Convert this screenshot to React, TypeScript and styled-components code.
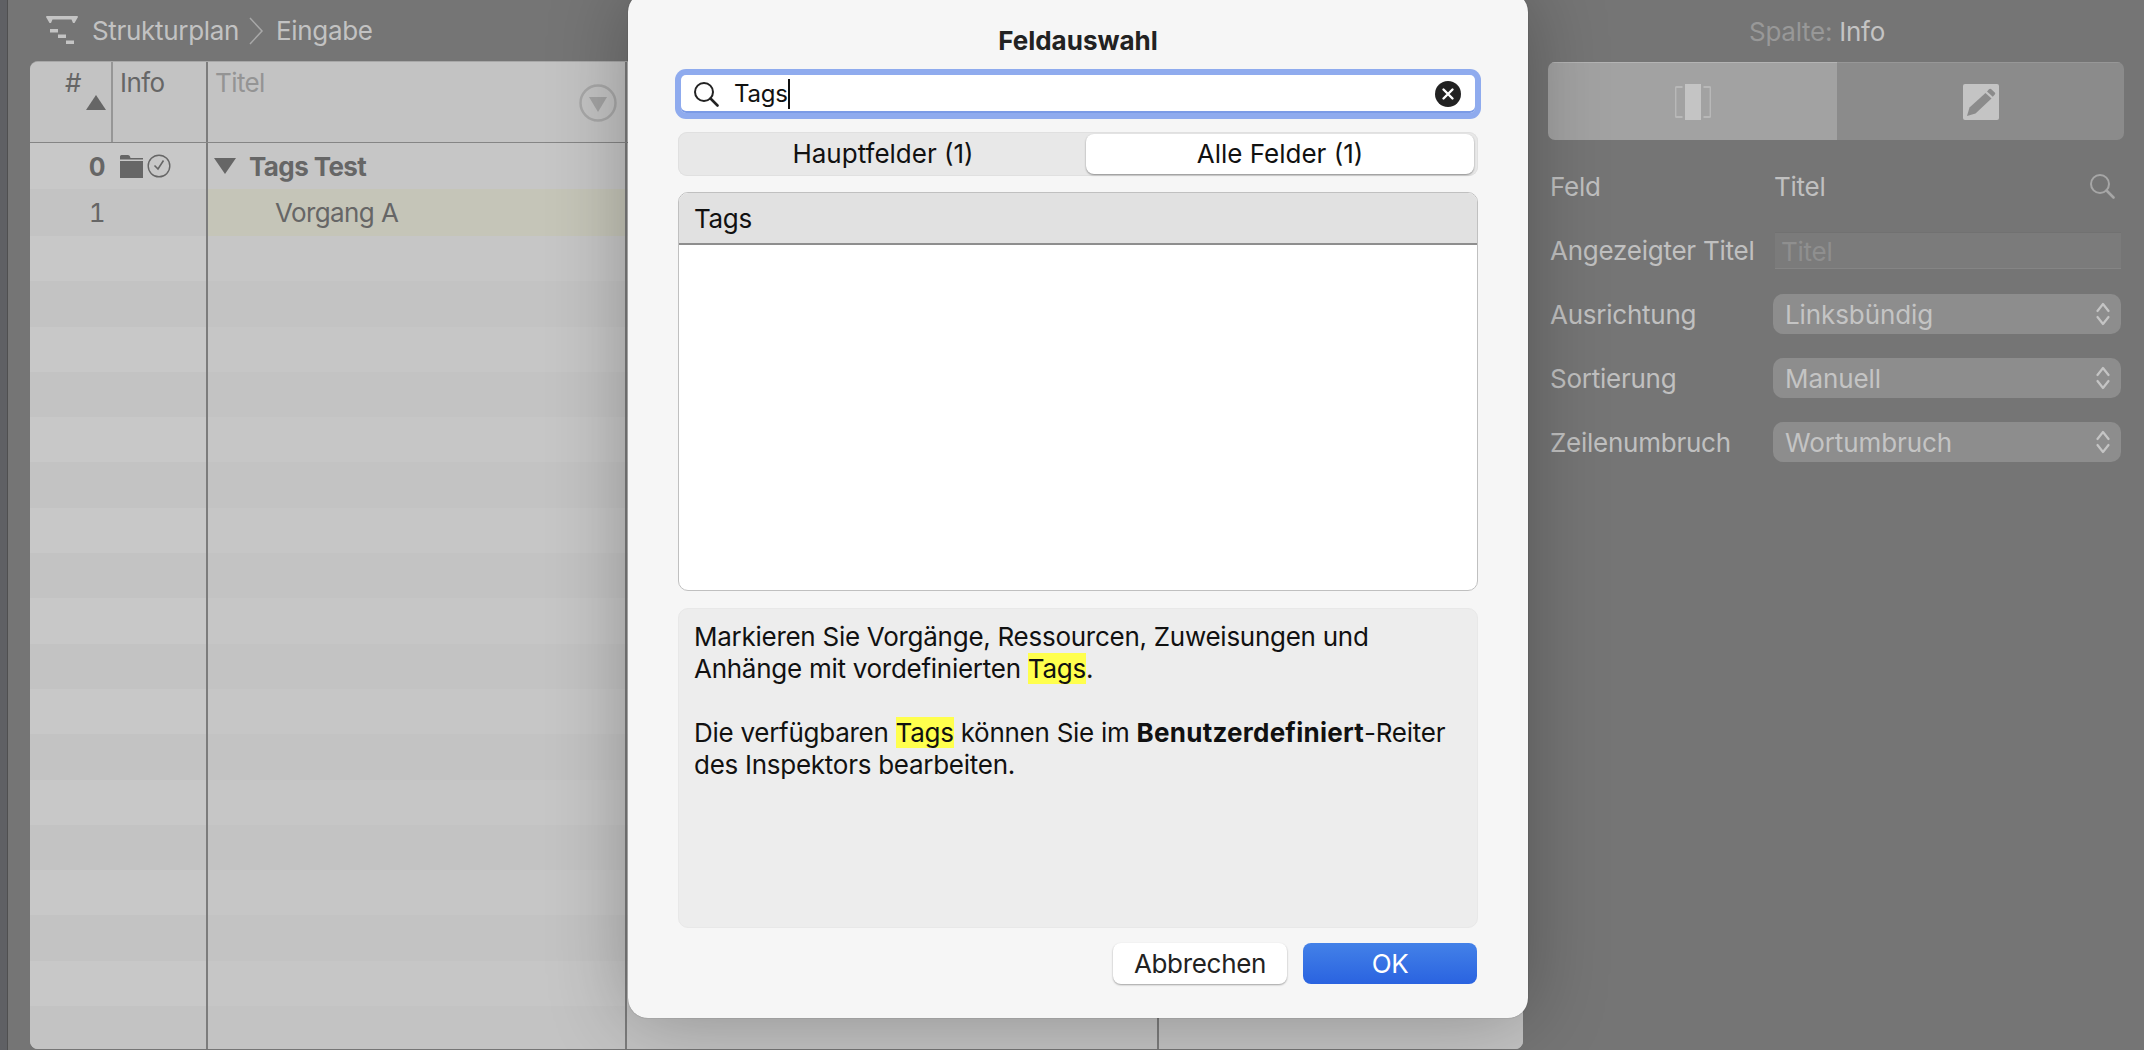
import * as React from 'react';
import styled, { createGlobalStyle } from 'styled-components';

const GlobalStyle = createGlobalStyle`
    html, body {
        margin: 0;
        padding: 0;
        height: 100%;
        overflow: hidden;
        background: #757575;
    }
    * {
        box-sizing: border-box;
    }
`

const Page = styled.div`
    display: flex;
    width: 2144px;
    height: 1050px;
    overflow: hidden;
    position: relative;
    font-family: 'Inter', 'Liberation Sans', sans-serif;
    font-size: 26px;
    letter-spacing: -0.32px;
`

const DockEdge = styled.div`
    width: 8px;
    background: #5f6064;
    border-right: 1px solid #4f4f50;
`

const Main = styled.div`
    width: 1515px;
    display: flex;
    flex-direction: column;
    background: #757575;
`

const Breadcrumb = styled.div`
    height: 61px;
    display: flex;
    align-items: center;
    padding-left: 38px;
    color: #c2c2c2;
`

const CrumbText = styled.span`
    margin-left: 14px;
`

const CrumbChevron = styled.svg`
    width: 16px;
    height: 28px;
    margin-left: 9px;
    margin-right: -2px;
`

const Table = styled.div`
    flex: 1;
    margin: 0 0 1px 22px;
    border-radius: 8px;
    overflow: hidden;
    background: #c4c4c4;
    border-top: 1px solid #a8a8a8;
    color: #666666;
    letter-spacing: -0.6px;
`

const columns = '83px 95px 419px 532px 1fr'

const HeaderRow = styled.div`
    display: grid;
    grid-template-columns: ${columns};
    height: 81px;
    border-bottom: 1px solid #858585;
    background: #c3c3c3;
`

const HeaderCell = styled.div<{ line?: string }>`
    position: relative;
    padding: 5px 0 0 7px;
    line-height: 32px;
    border-right: 2px solid ${({ line }) => line || '#7c7c7c'};
`

const HashLabel = styled.div`
    padding-left: 28px;
`

const SortArrow = styled.div`
    position: absolute;
    left: 56px;
    top: 33px;
    width: 0;
    height: 0;
    border-left: 10px solid transparent;
    border-right: 10px solid transparent;
    border-bottom: 15px solid #666666;
`

const TitleLabel = styled.span`
    color: #949494;
`

const FilterButton = styled.svg`
    position: absolute;
    right: 8px;
    top: 22px;
    width: 38px;
    height: 38px;
`

const Row = styled.div<{ $striped: boolean; $height: number }>`
    display: grid;
    grid-template-columns: ${columns};
    height: ${({ $height }) => $height}px;
    background: ${({ $striped }) => ($striped ? '#c3c3c3' : '#c8c8c8')};
`

const NumberCell = styled.div<{ $bold?: boolean }>`
    display: flex;
    align-items: center;
    justify-content: flex-end;
    padding-right: 8px;
    font-variant-numeric: tabular-nums;
    font-weight: ${({ $bold }) => ($bold ? 700 : 400)};
`

const InfoCell = styled.div`
    display: flex;
    align-items: center;
    gap: 4px;
    padding-left: 7px;
    border-right: 2px solid #7c7c7c;
`

const TitleCell = styled.div<{ $tint?: boolean; $indent?: number; $bold?: boolean }>`
    display: flex;
    align-items: center;
    padding-left: ${({ $indent }) => $indent || 0}px;
    background: ${({ $tint }) => ($tint ? '#c5c5b8' : 'rgba(195, 195, 195, 0.5)')};
    font-weight: ${({ $bold }) => ($bold ? 700 : 400)};
    border-right: 2px solid #7c7c7c;
`

const Disclosure = styled.div`
    width: 0;
    height: 0;
    margin-right: 13px;
    border-left: 11px solid transparent;
    border-right: 11px solid transparent;
    border-top: 16px solid #666666;
`

const PlainCell = styled.div<{ $line?: boolean }>`
    background: rgba(195, 195, 195, 0.5);
    border-right: ${({ $line }) => ($line ? '2px solid #7c7c7c' : 'none')};
`

const Inspector = styled.div`
    flex: 1;
    display: flex;
    flex-direction: column;
    padding: 0 20px 0 27px;
    background: #757575;
    letter-spacing: -0.25px;
`

const InspectorTitle = styled.div`
    height: 62px;
    display: flex;
    align-items: center;
    justify-content: center;
    gap: 7px;
    padding-right: 40px;
    color: #989898;
`

const InspectorTitleValue = styled.span`
    color: #c4c4c4;
`

const ModeSwitch = styled.div`
    display: grid;
    grid-template-columns: 289px 1fr;
    height: 78px;
    margin-left: -2px;
    border-radius: 7px;
    overflow: hidden;
    margin-bottom: 14px;
`

const ModeButton = styled.div<{ $active?: boolean }>`
    display: flex;
    align-items: center;
    justify-content: center;
    background: ${({ $active }) => ($active ? '#a2a2a2' : '#8b8b8b')};
    border-top: 1px solid ${({ $active }) => ($active ? '#b4b4b4' : '#979797')};
`

const FieldRow = styled.div`
    display: grid;
    grid-template-columns: 223px 1fr;
    align-items: center;
    height: 64px;
    color: #c0c0c0;
`

const FieldValue = styled.div`
    display: flex;
    align-items: center;
    justify-content: space-between;
    padding-right: 9px;
    padding-left: 1px;
`

const DisabledInput = styled.div`
    height: 37px;
    margin: 0 3px 0 2px;
    padding-left: 6px;
    line-height: 37px;
    background: #7b7b7b;
    border-top: 1px solid #717171;
    border-bottom: 1px solid #858585;
    color: #8f8f8f;
`

const SelectBox = styled.div`
    height: 40px;
    margin-right: 3px;
    padding: 0 11px 0 12px;
    display: flex;
    align-items: center;
    justify-content: space-between;
    background: #8d8d8d;
    border-radius: 10px;
    color: #c4c4c4;
    letter-spacing: -0.1px;
`

const Dialog = styled.div`
    position: absolute;
    left: 628px;
    top: -8px;
    width: 900px;
    height: 1026px;
    padding: 8px 50px 0 50px;
    display: flex;
    flex-direction: column;
    background: #f6f6f6;
    border-radius: 20px;
    box-shadow: 0 0 1px rgba(0, 0, 0, 0.5), 0 0 80px rgba(0, 0, 0, 0.28);
    color: #111111;
`

const DialogTitle = styled.div`
    height: 75px;
    padding-top: 22px;
    line-height: 38px;
    text-align: center;
    font-weight: 700;
    letter-spacing: 0;
    color: #222222;
`

const SearchField = styled.div`
    height: 38px;
    margin: 0 3px 0 3px;
    display: flex;
    align-items: center;
    padding: 0 14px 0 12px;
    background: #ffffff;
    border-radius: 5px;
    box-shadow: 0 0 0 6px #8fabee, inset 0 -2px 0 #7b9be6;
`

const SearchText = styled.span`
    margin-left: 15px;
    line-height: 30px;
    font-size: 24px;
    letter-spacing: -0.2px;
`

const Caret = styled.span`
    width: 2px;
    height: 30px;
    background: #111111;
    flex: none;
`

const ClearButton = styled.svg`
    width: 26px;
    height: 26px;
    margin-left: auto;
`

const TabBar = styled.div`
    display: flex;
    height: 44px;
    margin-top: 19px;
    padding: 2px 4px 2px 2px;
    background: #e8e8e8;
    border-radius: 9px;
    box-shadow: inset 0 0 0 1px #e0e0e0;
    letter-spacing: 0;
`

const Tab = styled.div<{ $active?: boolean }>`
    display: flex;
    align-items: center;
    justify-content: center;
    padding-bottom: 2px;
    flex: ${({ $active }) => ($active ? '0 0 388px' : '1')};
    border-radius: 8px;
    background: ${({ $active }) => ($active ? '#ffffff' : 'transparent')};
    box-shadow: ${({ $active }) => ($active ? '0 1px 2px rgba(0, 0, 0, 0.4)' : 'none')};
`

const FieldList = styled.div`
    height: 399px;
    margin-top: 16px;
    background: #ffffff;
    border: 1px solid #c0c0c0;
    border-radius: 10px;
    overflow: hidden;
`

const FieldListHeader = styled.div`
    height: 52px;
    padding-left: 15px;
    display: flex;
    align-items: center;
    background: #e1e1e1;
    border-bottom: 2px solid #8e8e8e;
`

const Description = styled.div`
    height: 320px;
    margin-top: 17px;
    padding: 12px 15px 0;
    background: #ededed;
    border: 1px solid #e8e8e8;
    border-radius: 10px;
    line-height: 32px;
    letter-spacing: -0.27px;
    white-space: nowrap;
`

const Paragraph = styled.p`
    margin: 0 0 32px 0;
`

const Emphasis = styled.strong`
    letter-spacing: 0.25px;
`

const Highlight = styled.mark`
    background: #ffff4d;
    color: inherit;
    padding: 0;
`

const DialogFooter = styled.div`
    display: flex;
    justify-content: flex-end;
    gap: 16px;
    margin-top: 15px;
    padding-right: 1px;
`

const DialogButton = styled.div<{ $primary?: boolean }>`
    width: 174px;
    height: 41px;
    display: flex;
    align-items: center;
    justify-content: center;
    border-radius: 8px;
    color: ${({ $primary }) => ($primary ? '#ffffff' : '#222222')};
    background: ${({ $primary }) => ($primary ? 'linear-gradient(180deg, #4381e8, #2a63e0)' : '#ffffff')};
    box-shadow: ${({ $primary }) => ($primary ? 'none' : '0 1px 2px rgba(0, 0, 0, 0.35)')};
`

const StructureIcon = () => (
    <svg width="32" height="30" viewBox="0 0 32 30" fill="#c4c4c4">
        <path d="M1 0h30q1 0 1 1l-3.500 6h-1.500l-1.500-3.500h-19l-1.500 3.500h-1.500l-3.500-6q0-1 1-1z" />
        <rect x="4" y="13" width="8" height="3.500" />
        <rect x="12" y="18.500" width="8" height="3.500" />
        <rect x="20" y="24.500" width="8" height="3.500" />
    </svg>
)

const FolderIcon = () => (
    <svg width="23" height="23" viewBox="0 0 23 23" fill="#666666">
        <path d="M0 1.500q0-1.500 1.500-1.500h6.500q1.500 0 2 1.500l0.500 1.500h12.500v1.500h-23z" />
        <rect x="0" y="6" width="23" height="17" />
    </svg>
)

const ClockIcon = () => (
    <svg width="24" height="24" viewBox="0 0 24 24" fill="none" stroke="#666666">
        <circle cx="12" cy="12" r="10.800" strokeWidth="1.400" />
        <path d="M7.500 11.500l3.500 3.500 5.500-8.500" strokeWidth="1.600" />
    </svg>
)

const SearchGlyph = ({ color, size }: { color: string; size: number }) => (
    <svg width={size} height={size} viewBox="0 0 26 26" fill="none" stroke={color} strokeLinecap="round">
        <circle cx="11" cy="11" r="9" strokeWidth="2" />
        <path d="M17.500 17.500l7 7" strokeWidth="2.600" />
    </svg>
)

const SelectChevrons = () => (
    <svg width="14" height="24" viewBox="0 0 14 24" fill="none" stroke="#c4c4c4" strokeWidth="2.200" strokeLinecap="round" strokeLinejoin="round">
        <path d="M1.500 9l5.500-7 5.500 7" />
        <path d="M1.500 15l5.500 7 5.500-7" />
    </svg>
)

const ColumnIcon = () => (
    <svg width="36" height="36" viewBox="0 0 36 36" fill="none">
        <path d="M7.500 3h-6a1 1 0 0 0-1 1v28a1 1 0 0 0 1 1h6M28.500 3h6a1 1 0 0 1 1 1v28a1 1 0 0 1-1 1h-6" stroke="#b8b8b8" strokeWidth="1.800" />
        <rect x="10" y="0" width="16" height="36" fill="#c4c4c4" />
    </svg>
)

const NoteIcon = () => (
    <svg width="36" height="36" viewBox="0 0 36 36">
        <rect width="36" height="36" rx="2" fill="#c4c4c4" />
        <path d="M4 32l2.500-8.500 16-14.500 6 5.500-16 15z" fill="#8b8b8b" />
        <path d="M24 7.500l2-2.200q1-1 2-0.200l3.800 3.400q1 1 0 2l-2 2.200z" fill="#8b8b8b" />
    </svg>
)

const rowHeights = [46, 47, ...Array(20).fill(45.3)]

const fields = [
    { label: 'Ausrichtung', value: 'Linksbündig' },
    { label: 'Sortierung', value: 'Manuell' },
    { label: 'Zeilenumbruch', value: 'Wortumbruch' },
]

const App = () => {
    return (
        <Page>
            <GlobalStyle />
            <DockEdge />
            <Main>
                <Breadcrumb>
                    <StructureIcon />
                    <CrumbText>Strukturplan</CrumbText>
                    <CrumbChevron viewBox="0 0 16 28" fill="none" stroke="#a8a8a8" strokeWidth="1.500">
                        <path d="M2 1l12 13-12 13" />
                    </CrumbChevron>
                    <CrumbText>Eingabe</CrumbText>
                </Breadcrumb>
                <Table>
                    <HeaderRow>
                        <HeaderCell line="#969696">
                            <HashLabel>#</HashLabel>
                            <SortArrow />
                        </HeaderCell>
                        <HeaderCell>Info</HeaderCell>
                        <HeaderCell>
                            <TitleLabel>Titel</TitleLabel>
                            <FilterButton viewBox="0 0 38 38">
                                <circle cx="19" cy="19" r="17.500" fill="none" stroke="#a8a8a8" strokeWidth="2.500" />
                                <path d="M10 13h18l-9 15z" fill="#a3a3a3" />
                            </FilterButton>
                        </HeaderCell>
                        <HeaderCell />
                        <PlainCell />
                    </HeaderRow>
                    {rowHeights.map((height, index) => (
                        <Row key={index} $striped={index % 2 === 1} $height={height}>
                            <NumberCell $bold={index === 0}>{index < 2 ? index : ''}</NumberCell>
                            <InfoCell>
                                {index === 0 && <FolderIcon />}
                                {index === 0 && <ClockIcon />}
                            </InfoCell>
                            {index === 0 ? (
                                <TitleCell $indent={6} $bold>
                                    <Disclosure />
                                    Tags Test
                                </TitleCell>
                            ) : index === 1 ? (
                                <TitleCell $tint $indent={67}>Vorgang A</TitleCell>
                            ) : (
                                <TitleCell />
                            )}
                            <PlainCell $line />
                            <PlainCell />
                        </Row>
                    ))}
                </Table>
            </Main>
            <Inspector>
                <InspectorTitle>
                    Spalte:
                    <InspectorTitleValue>Info</InspectorTitleValue>
                </InspectorTitle>
                <ModeSwitch>
                    <ModeButton $active><ColumnIcon /></ModeButton>
                    <ModeButton><NoteIcon /></ModeButton>
                </ModeSwitch>
                <FieldRow>
                    <span>Feld</span>
                    <FieldValue>
                        Titel
                        <SearchGlyph color="#a6a6a6" size={26} />
                    </FieldValue>
                </FieldRow>
                <FieldRow>
                    <span>Angezeigter Titel</span>
                    <DisabledInput>Titel</DisabledInput>
                </FieldRow>
                {fields.map((field) => (
                    <FieldRow key={field.label}>
                        <span>{field.label}</span>
                        <SelectBox>
                            {field.value}
                            <SelectChevrons />
                        </SelectBox>
                    </FieldRow>
                ))}
            </Inspector>
            <Dialog>
                <DialogTitle>Feldauswahl</DialogTitle>
                <SearchField>
                    <SearchGlyph color="#222222" size={26} />
                    <SearchText>Tags</SearchText>
                    <Caret />
                    <ClearButton viewBox="0 0 26 26">
                        <circle cx="13" cy="13" r="13" fill="#222222" />
                        <path d="M8.500 8.500l9 9M17.500 8.500l-9 9" stroke="#ffffff" strokeWidth="2.400" strokeLinecap="round" />
                    </ClearButton>
                </SearchField>
                <TabBar>
                    <Tab>Hauptfelder (1)</Tab>
                    <Tab $active>Alle Felder (1)</Tab>
                </TabBar>
                <FieldList>
                    <FieldListHeader>Tags</FieldListHeader>
                </FieldList>
                <Description>
                    <Paragraph>
                        Markieren Sie Vorgänge, Ressourcen, Zuweisungen und
                        <br />
                        Anhänge mit vordefinierten <Highlight>Tags</Highlight>.
                    </Paragraph>
                    <Paragraph>
                        Die verfügbaren <Highlight>Tags</Highlight> können Sie im <Emphasis>Benutzerdefiniert</Emphasis>-Reiter
                        <br />
                        des Inspektors bearbeiten.
                    </Paragraph>
                </Description>
                <DialogFooter>
                    <DialogButton>Abbrechen</DialogButton>
                    <DialogButton $primary>OK</DialogButton>
                </DialogFooter>
            </Dialog>
        </Page>
    )
}

export default App
